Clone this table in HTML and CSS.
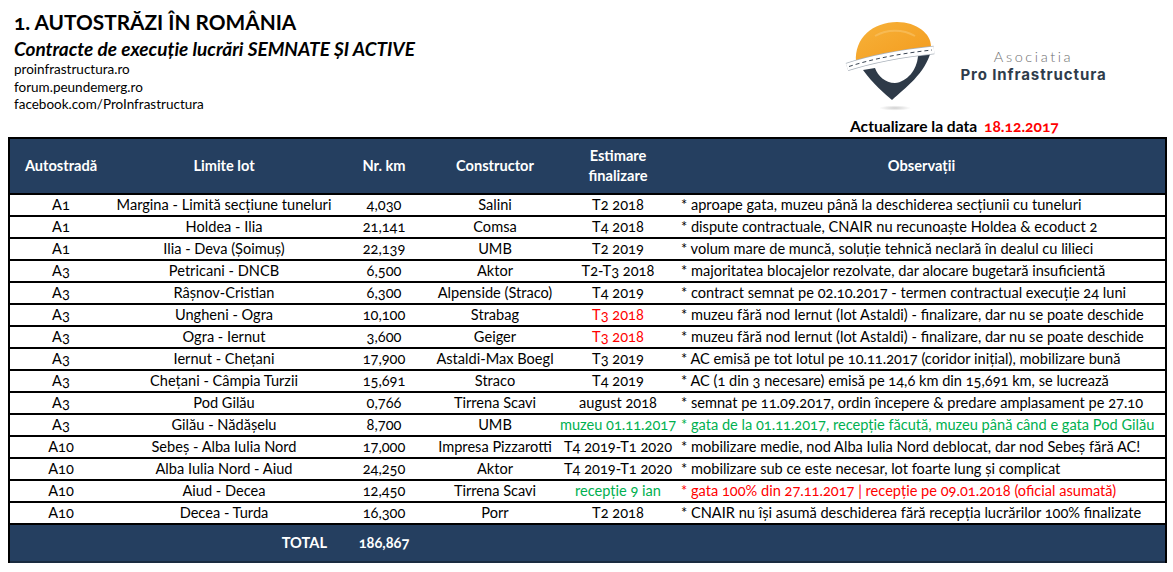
FILE: index.html
```html
<!DOCTYPE html>
<html lang="ro">
<head>
<meta charset="utf-8">
<title>Autostrăzi în România</title>
<link rel="stylesheet" href="styles.css">
</head>
<body>
<div class="page">
  <header class="top">
    <div class="intro">
      <h1 class="title">1. AUTOSTRĂZI ÎN ROMÂNIA</h1>
      <h2 class="subtitle">Contracte de execuție lucrări SEMNATE ȘI ACTIVE</h2>
      <ul class="links">
        <li>proinfrastructura.ro</li>
        <li>forum.peundemerg.ro</li>
        <li>facebook.com/ProInfrastructura</li>
      </ul>
    </div>
    <div class="brand">
      <div class="logo-row">
        <svg class="logo" width="110" height="95" viewBox="0 0 110 95">
          <defs>
            <linearGradient id="hg" x1="0" y1="0" x2="1" y2="1">
              <stop offset="0" stop-color="#f7b23a"/>
              <stop offset="1" stop-color="#f39a1c"/>
            </linearGradient>
            <radialGradient id="sh" cx="0.5" cy="0.5" r="0.5">
              <stop offset="0" stop-color="#cfcfcf"/>
              <stop offset="1" stop-color="#ffffff"/>
            </radialGradient>
          </defs>
          <ellipse cx="50" cy="90" rx="16" ry="2.6" fill="url(#sh)"/>
          <path d="M18,52 C28,66 40,76 47,82 C60,70 80,56 86,33 L73,38 C72,52 62,64 50,65 C40,65 33,58 30,50 Z" fill="#2e3a48"/>
          <path d="M11,44 C9,20 28,4 52,4 C72,4 86,16 86,28 L86,32 C60,34 32,39 11,46 Z" fill="url(#hg)"/>
          <path d="M30,18 C42,11 58,11 70,18" fill="none" stroke="#f9c46a" stroke-width="2" opacity="0.6"/>
          <path d="M2,49 C30,40 60,35 89,32" fill="none" stroke="#aab2bb" stroke-width="8.5"/>
          <path d="M2,49 C30,40 60,35 89,32" fill="none" stroke="#ffffff" stroke-width="7"/>
          <path d="M4,48.5 C30,40 60,35 87,32" fill="none" stroke="#3a4553" stroke-width="1" stroke-dasharray="4 3"/>
        </svg>
        <div class="brand-text">
          <div class="brand-sub">Asociatia</div>
          <div class="brand-name">Pro Infrastructura</div>
        </div>
      </div>
      <div class="update">Actualizare la data <span class="red">18.12.2017</span></div>
    </div>
  </header>

  <table class="grid">
    <colgroup>
      <col class="c-a"><col class="c-lot"><col class="c-km"><col class="c-con"><col class="c-est"><col class="c-obs">
    </colgroup>
    <thead>
      <tr>
        <th>Autostradă</th>
        <th>Limite lot</th>
        <th>Nr. km</th>
        <th>Constructor</th>
        <th>Estimare<br>finalizare</th>
        <th>Observații</th>
      </tr>
    </thead>
    <tbody>
      <tr><td>A1</td><td>Margina - Limită secțiune tuneluri</td><td>4,030</td><td>Salini</td><td>T2 2018</td><td class="obs">* aproape gata, muzeu până la deschiderea secțiunii cu tuneluri</td></tr>
      <tr><td>A1</td><td>Holdea - Ilia</td><td>21,141</td><td>Comsa</td><td>T4 2018</td><td class="obs">* dispute contractuale, CNAIR nu recunoaște Holdea &amp; ecoduct 2</td></tr>
      <tr><td>A1</td><td>Ilia - Deva (Șoimuș)</td><td>22,139</td><td>UMB</td><td>T2 2019</td><td class="obs">* volum mare de muncă, soluție tehnică neclară în dealul cu lilieci</td></tr>
      <tr><td>A3</td><td>Petricani - DNCB</td><td>6,500</td><td>Aktor</td><td>T2-T3 2018</td><td class="obs">* majoritatea blocajelor rezolvate, dar alocare bugetară insuficientă</td></tr>
      <tr><td>A3</td><td>Râșnov-Cristian</td><td>6,300</td><td>Alpenside (Straco)</td><td>T4 2019</td><td class="obs">* contract semnat pe 02.10.2017 - termen contractual execuție 24 luni</td></tr>
      <tr><td>A3</td><td>Ungheni - Ogra</td><td>10,100</td><td>Strabag</td><td class="red">T3 2018</td><td class="obs">* muzeu fără nod Iernut (lot Astaldi) - finalizare, dar nu se poate deschide</td></tr>
      <tr><td>A3</td><td>Ogra - Iernut</td><td>3,600</td><td>Geiger</td><td class="red">T3 2018</td><td class="obs">* muzeu fără nod Iernut (lot Astaldi) - finalizare, dar nu se poate deschide</td></tr>
      <tr><td>A3</td><td>Iernut - Chețani</td><td>17,900</td><td>Astaldi-Max Boegl</td><td>T3 2019</td><td class="obs">* AC emisă pe tot lotul pe 10.11.2017 (coridor inițial), mobilizare bună</td></tr>
      <tr><td>A3</td><td>Chețani - Câmpia Turzii</td><td>15,691</td><td>Straco</td><td>T4 2019</td><td class="obs">* AC (1 din 3 necesare) emisă pe 14,6 km din 15,691 km, se lucrează</td></tr>
      <tr><td>A3</td><td>Pod Gilău</td><td>0,766</td><td>Tirrena Scavi</td><td>august 2018</td><td class="obs">* semnat pe 11.09.2017, ordin începere &amp; predare amplasament pe 27.10</td></tr>
      <tr><td>A3</td><td>Gilău - Nădășelu</td><td>8,700</td><td>UMB</td><td class="green">muzeu 01.11.2017</td><td class="obs green">* gata de la 01.11.2017, recepție făcută, muzeu până când e gata Pod Gilău</td></tr>
      <tr><td>A10</td><td>Sebeș - Alba Iulia Nord</td><td>17,000</td><td>Impresa Pizzarotti</td><td>T4 2019-T1 2020</td><td class="obs">* mobilizare medie, nod Alba Iulia Nord deblocat, dar nod Sebeș fără AC!</td></tr>
      <tr><td>A10</td><td>Alba Iulia Nord - Aiud</td><td>24,250</td><td>Aktor</td><td>T4 2019-T1 2020</td><td class="obs">* mobilizare sub ce este necesar, lot foarte lung și complicat</td></tr>
      <tr><td>A10</td><td>Aiud - Decea</td><td>12,450</td><td>Tirrena Scavi</td><td class="green">recepție 9 ian</td><td class="obs red">* gata 100% din 27.11.2017 | recepție pe 09.01.2018 (oficial asumată)</td></tr>
      <tr><td>A10</td><td>Decea - Turda</td><td>16,300</td><td>Porr</td><td>T2 2018</td><td class="obs">* CNAIR nu își asumă deschiderea fără recepția lucrărilor 100% finalizate</td></tr>
    </tbody>
    <tfoot>
      <tr><td></td><td class="total-label">TOTAL</td><td class="total-num">186,867</td><td></td><td></td><td></td></tr>
    </tfoot>
  </table>
</div>
</body>
</html>
```

FILE: styles.css
```css
* { box-sizing: border-box; }

body {
  margin: 0;
  background: #ffffff;
  color: #000000;
  font-family: "Lato", "Open Sans", "Liberation Sans", sans-serif;
  font-variant-numeric: oldstyle-nums;
}

.page {
  padding: 0 6px 0 8px;
}

.top {
  display: grid;
  grid-template-columns: 1fr 322px;
  height: 137px;
}

.intro {
  padding: 9px 0 0 6px;
}

.title {
  margin: 0;
  font-size: 20.8px;
  line-height: 25px;
  font-weight: 700;
}

.subtitle {
  margin: 4px 0 0;
  font-size: 19px;
  line-height: 21px;
  font-weight: 700;
  font-style: italic;
}

.links {
  list-style: none;
  margin: 2px 0 0;
  padding: 0;
  font-size: 13.5px;
  line-height: 17.5px;
}

.brand {
  display: flex;
  flex-direction: column;
}

.logo-row {
  display: flex;
  align-items: flex-start;
  margin-top: 18px;
  height: 95px;
}

.logo {
  display: block;
  flex: none;
}

.brand-text {
  width: 157px;
  margin-top: 30px;
  text-align: center;
}

.brand-sub {
  font-family: "Lato", sans-serif;
  font-weight: 300;
  font-size: 14.5px;
  line-height: 18px;
  letter-spacing: 2.6px;
  color: #6e6e6e;
}

.brand-name {
  font-family: "Inter", "Open Sans", sans-serif;
  font-weight: 700;
  font-size: 15px;
  line-height: 18.2px;
  letter-spacing: 0.9px;
  color: #2f3c4b;
}

.update {
  margin: 4px 0 0 5px;
  font-size: 15.6px;
  line-height: 18px;
  font-weight: 700;
}

.update .red {
  margin-left: 3px;
}

.red { color: #ff0000; }
.green { color: #00b050; }

.grid {
  width: 1159px;
  table-layout: fixed;
  border-collapse: separate;
  border-spacing: 0;
  border-left: 2px solid #000;
  border-right: 2px solid #000;
  font-size: 14.6px;
}

.c-a { width: 102px; }
.c-lot { width: 224px; }
.c-km { width: 96px; }
.c-con { width: 126px; }
.c-est { width: 120px; }
.c-obs { width: auto; }

.grid th {
  height: 58px;
  padding: 0;
  background: #253f60;
  color: #ffffff;
  font-weight: 700;
  line-height: 20px;
  text-align: center;
  vertical-align: middle;
  border-top: 2px solid #000;
  border-bottom: 2px solid #000;
}

.grid td {
  padding: 0;
  height: 22px;
  line-height: 20px;
  text-align: center;
  white-space: nowrap;
  overflow: hidden;
  border-bottom: 2px solid #000;
}

.grid td.obs {
  text-align: left;
  padding-left: 3px;
}

.grid tfoot td {
  height: 38px;
  background: #253f60;
  color: #ffffff;
  font-weight: 700;
  border-bottom: 2px solid #1a2b40;
}

.grid td.total-label {
  text-align: right;
  padding-right: 9px;
}
```
